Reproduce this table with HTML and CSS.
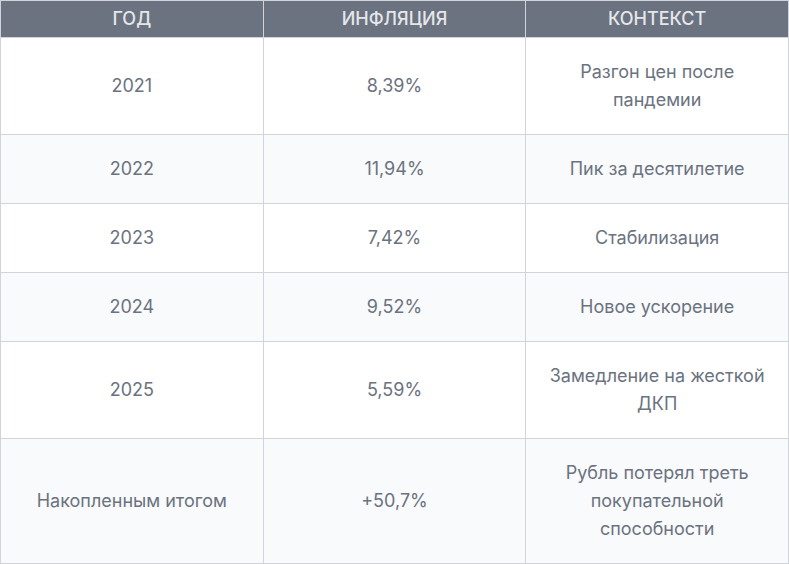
FILE: index.html
```html
<!DOCTYPE html>
<html lang="ru">
<head>
<meta charset="utf-8">
<link rel="stylesheet" href="styles.css">
</head>
<body>
<table class="infl">
  <thead>
    <tr><th>Год</th><th>Инфляция</th><th>Контекст</th></tr>
  </thead>
  <tbody>
    <tr><td>2021</td><td>8,39%</td><td>Разгон цен после пандемии</td></tr>
    <tr><td>2022</td><td>11,94%</td><td>Пик за десятилетие</td></tr>
    <tr><td>2023</td><td>7,42%</td><td>Стабилизация</td></tr>
    <tr><td>2024</td><td>9,52%</td><td>Новое ускорение</td></tr>
    <tr><td>2025</td><td>5,59%</td><td>Замедление на жесткой ДКП</td></tr>
    <tr><td>Накопленным итогом</td><td>+50,7%</td><td>Рубль потерял треть покупательной способности</td></tr>
  </tbody>
</table>
</body>
</html>
```
FILE: styles.css
```css
html, body {
  margin: 0;
  padding: 0;
  background: #ffffff;
}
body {
  font-family: Inter, "Noto Sans", sans-serif;
}
.infl {
  width: 789px;
  border-collapse: collapse;
  table-layout: fixed;
}
.infl th {
  background: #6b7280;
  color: #e5e7eb;
  font-weight: 500;
  font-size: 18px;
  line-height: 20px;
  padding: 8px 20px;
  text-transform: uppercase;
  border: 1px solid #d1d5db;
  text-align: center;
}
.infl td {
  color: #6b7280;
  font-size: 18px;
  line-height: 28px;
  padding: 20px 20px;
  border: 1px solid #d1d5db;
  text-align: center;
  vertical-align: middle;
}
.infl tbody tr:nth-child(even) td {
  background: #f9fafb;
}
```
